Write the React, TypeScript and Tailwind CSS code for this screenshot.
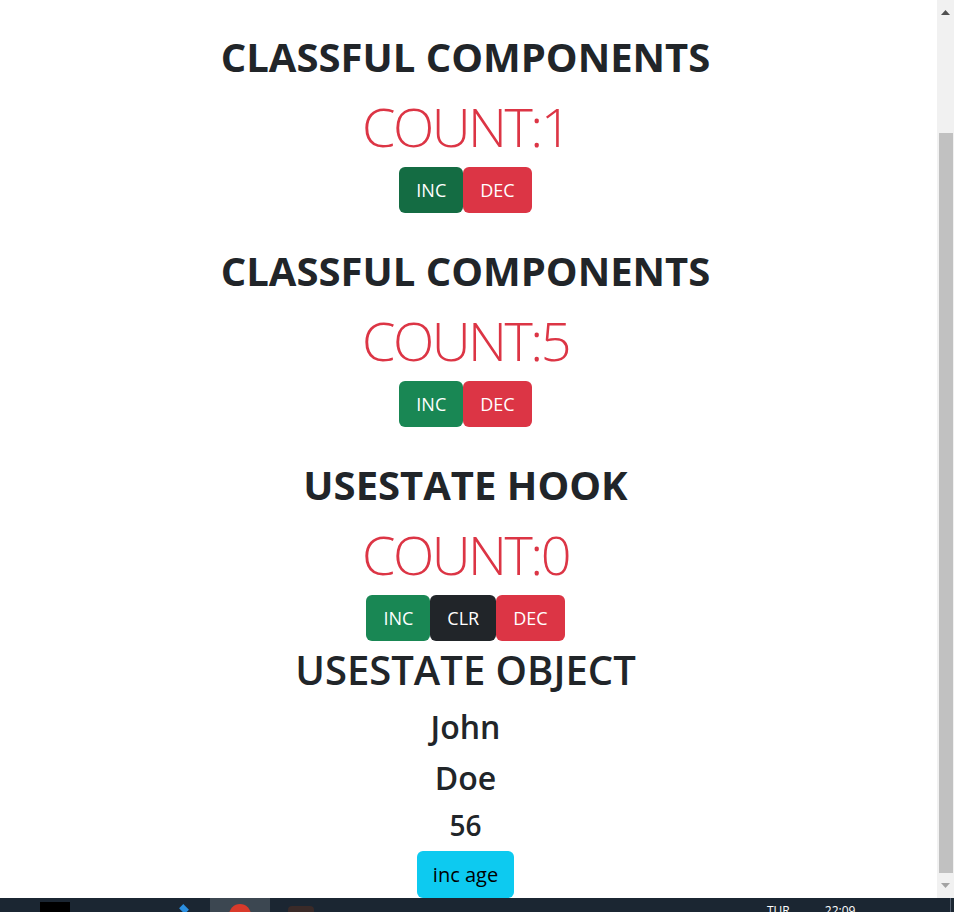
import React from 'react';

const font = { fontFamily: '"Open Sans", "Noto Sans", sans-serif' };

function Btn({ label, color }: { label: string; color: string }) {
  return (
    <button className={`h-[46px] px-[17px] rounded-md text-[18px] text-white leading-[46px] ${color}`}>
      {label}
    </button>
  );
}

function Counter({ title, count, buttons, last }: { title: string; count: number; buttons: { label: string; color: string }[]; last?: boolean }) {
  return (
    <div className={last ? 'mb-[5px]' : 'mb-[34px]'}>
      <h1 className="text-[40px] leading-[48px] font-bold text-[#212529]">{title}</h1>
      <div className="mt-3 text-[54px] leading-[67px] font-light tracking-[-2.5px] text-[#dc3545]">COUNT:{count}</div>
      <div className="mt-[7px] flex justify-center">
        {buttons.map((b) => (
          <Btn key={b.label} label={b.label} color={b.color} />
        ))}
      </div>
    </div>
  );
}

export default function App() {
  return (
    <div className="h-[912px] w-[954px] flex flex-col overflow-hidden bg-white" style={font}>
      <div className="flex h-[898px]">
        <div className="w-[937px] pr-[6px] pt-[33px] text-center overflow-hidden">
          <Counter
            title="CLASSFUL COMPONENTS"
            count={1}
            buttons={[
              { label: 'INC', color: 'bg-[#146c43]' },
              { label: 'DEC', color: 'bg-[#dc3545]' },
            ]}
          />
          <Counter
            title="CLASSFUL COMPONENTS"
            count={5}
            buttons={[
              { label: 'INC', color: 'bg-[#198754]' },
              { label: 'DEC', color: 'bg-[#dc3545]' },
            ]}
          />
          <Counter
            title="USESTATE HOOK"
            count={0}
            last
            buttons={[
              { label: 'INC', color: 'bg-[#198754]' },
              { label: 'CLR', color: 'bg-[#212529]' },
              { label: 'DEC', color: 'bg-[#dc3545]' },
            ]}
          />
          <h1 className="text-[40px] leading-[48px] font-semibold text-[#212529]">USESTATE OBJECT</h1>
          <h2 className="mt-[14px] text-[32px] leading-[38px] font-semibold text-[#212529]">John</h2>
          <h2 className="mt-[13px] text-[32px] leading-[38px] font-semibold text-[#212529]">Doe</h2>
          <h3 className="mt-[11px] text-[28px] leading-[34px] font-semibold text-[#212529]">56</h3>
          <button className="mt-[9px] h-[47px] px-4 rounded-md bg-[#0dcaf0] text-[20px] text-black leading-[47px]">
            inc age
          </button>
        </div>
        <div className="w-[17px] bg-[#f1f1f1] flex flex-col items-center">
          <div className="h-[24px] flex items-center justify-center">
            <svg width="9" height="5" viewBox="0 0 9 5"><path d="M0 5 L4.5 0 L9 5 Z" fill="#505050" /></svg>
          </div>
          <div className="mt-[109px] w-[14px] h-[740px] bg-[#c1c1c1]" />
          <div className="h-[25px] flex items-center justify-center">
            <svg width="9" height="5" viewBox="0 0 9 5"><path d="M0 0 L9 0 L4.5 5 Z" fill="#a3a3a3" /></svg>
          </div>
        </div>
      </div>
      <div className="h-[14px] bg-[#1b2632] flex items-start relative overflow-hidden">
        <div className="ml-[40px] mt-[4px] w-[30px] h-[10px] bg-black" />
        <div className="ml-[110px] mt-[8px] w-[8px] h-[6px] bg-[#2b8fe0] rotate-45" />
        <div className="ml-[22px] w-[60px] h-[14px] bg-[#3c4751] flex justify-center">
          <div className="mt-[6px] w-[22px] h-[22px] rounded-full bg-[#d93a2b]" />
        </div>
        <div className="ml-[18px] mt-[8px] w-[26px] h-[6px] rounded-t bg-[#3a2a28]" />
        <div className="ml-[453px] mt-[6px] text-[12px] leading-[14px] text-white">TUR</div>
        <div className="ml-[35px] mt-[6px] text-[12px] leading-[14px] text-white">22:09</div>
        <div className="ml-auto mr-[3px] w-px h-[14px] bg-[#556070]" />
      </div>
    </div>
  );
}
